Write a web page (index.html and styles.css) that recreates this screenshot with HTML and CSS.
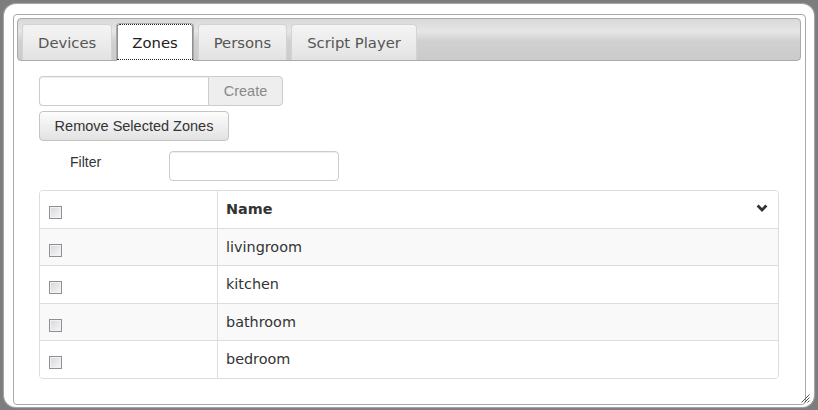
FILE: index.html
```html
<!DOCTYPE html>
<html>
<head>
<meta charset="utf-8">
<title>Zones</title>
<link rel="stylesheet" href="styles.css">
</head>
<body>
<div class="window">
  <div class="widget">
    <div class="tabbar">
      <div class="tab">Devices</div>
      <div class="tab active">Zones</div>
      <div class="tab">Persons</div>
      <div class="tab">Script Player</div>
    </div>
    <div class="panel">
      <div class="create-group">
        <input class="name-input" type="text">
        <button class="create-btn">Create</button>
      </div>
      <button class="remove-btn">Remove Selected Zones</button>
      <div class="filter-row">
        <label class="filter-label">Filter</label>
        <input class="filter-input" type="text">
      </div>
      <div class="table">
        <div class="row head">
          <div class="cell check"><input class="cb" type="checkbox"></div>
          <div class="cell name head-name"><span>Name</span>
            <svg class="chev" width="12" height="9" viewBox="0 0 12 9"><polyline points="1.6,1.6 6,6 10.4,1.6" fill="none" stroke="#333" stroke-width="2.8"/></svg>
          </div>
        </div>
        <div class="row odd">
          <div class="cell check"><input class="cb" type="checkbox"></div>
          <div class="cell name">livingroom</div>
        </div>
        <div class="row">
          <div class="cell check"><input class="cb" type="checkbox"></div>
          <div class="cell name">kitchen</div>
        </div>
        <div class="row odd">
          <div class="cell check"><input class="cb" type="checkbox"></div>
          <div class="cell name">bathroom</div>
        </div>
        <div class="row">
          <div class="cell check"><input class="cb" type="checkbox"></div>
          <div class="cell name">bedroom</div>
        </div>
      </div>
    </div>
  </div>
  <svg class="grip" width="9" height="9" viewBox="0 0 9 9">
    <line x1="8.5" y1="0.5" x2="0.5" y2="8.5" stroke="#555" stroke-width="1"/>
    <line x1="8.5" y1="3.5" x2="3.5" y2="8.5" stroke="#555" stroke-width="1"/>
    <line x1="8.5" y1="6.5" x2="6.5" y2="8.5" stroke="#555" stroke-width="1"/>
  </svg>
</div>
</body>
</html>
```
FILE: styles.css
```css
html, body {
  margin: 0;
  padding: 0;
  height: 100%;
}
body {
  background: #7d7d7d;
  overflow: hidden;
  font-family: "Liberation Sans", Arial, sans-serif;
}
.window {
  position: relative;
  box-sizing: border-box;
  margin: 4px 0 0 4px;
  width: 810px;
  height: 403px;
  padding: 10px 0 0 9px;
  background: #fff;
  border-radius: 12px;
  box-shadow: 0 0 1px 1px #a9a9a9;
}
.widget {
  box-sizing: border-box;
  width: 793px;
  height: 391px;
  border: 1px solid #aaa;
  border-radius: 4px;
  padding: 3px 4px 3px 3px;
}
.tabbar {
  box-sizing: border-box;
  height: 43px;
  border: 1px solid #aaa;
  border-radius: 4px;
  background: linear-gradient(#d9d9d9, #e6e6e6 30%, #d0d0d0 55%, #cbcbcb);
  display: flex;
  align-items: flex-end;
  gap: 4px;
  padding: 0 0 0 4px;
}
.tab {
  box-sizing: border-box;
  height: 36px;
  padding: 0 15px;
  border: 1px solid #d3d3d3;
  border-bottom: 0;
  border-radius: 4px 4px 0 0;
  background: linear-gradient(#f4f4f4, #ececec 50%, #e2e2e2);
  color: #555;
  font-family: "DejaVu Sans", Verdana, sans-serif;
  font-size: 14.8px;
  display: flex;
  align-items: center;
}
.tab.active {
  height: 38px;
  margin-bottom: -1px;
  background: #fff;
  border-color: #aaa;
  color: #212121;
  outline: 1px dotted #222;
  outline-offset: -2px;
}
.panel {
  padding: 15px 22px 0 22px;
}
.create-group {
  display: flex;
  height: 30px;
}
.name-input {
  box-sizing: border-box;
  width: 169px;
  height: 30px;
  margin: 0;
  border: 1px solid #ccc;
  border-right: 0;
  border-radius: 4px 0 0 4px;
  box-shadow: inset 0 1px 1px rgba(0,0,0,0.075);
  background: #fff;
}
.create-btn {
  box-sizing: border-box;
  width: 75px;
  height: 30px;
  margin: 0;
  padding: 0;
  border: 1px solid #ccc;
  border-radius: 0 4px 4px 0;
  background: #eee;
  color: #888;
  font-family: "Liberation Sans", Arial, sans-serif;
  font-size: 14.5px;
}
.remove-btn {
  display: block;
  box-sizing: border-box;
  margin: 5px 0 0 0;
  width: 190px;
  height: 30px;
  padding: 0;
  border: 1px solid #c4c4c4;
  border-radius: 4px;
  background: linear-gradient(#fdfdfd, #e2e2e2);
  color: #333;
  font-family: "Liberation Sans", Arial, sans-serif;
  font-size: 14.5px;
}
.filter-row {
  display: flex;
  align-items: flex-start;
  margin-top: 10px;
}
.filter-label {
  box-sizing: border-box;
  width: 130px;
  padding: 1px 0 0 31px;
  line-height: 20px;
  font-size: 14px;
  color: #333;
}
.filter-input {
  box-sizing: border-box;
  width: 170px;
  height: 30px;
  margin: 0;
  border: 1px solid #ccc;
  border-radius: 4px;
  box-shadow: inset 0 1px 1px rgba(0,0,0,0.075);
}
.table {
  margin-top: 9px;
  width: 740px;
  box-sizing: border-box;
  border: 1px solid #ddd;
  border-radius: 4px;
  overflow: hidden;
}
.row {
  display: grid;
  grid-template-columns: 178px 1fr;
  height: 37px;
  border-top: 1px solid #ddd;
  background: #fff;
}
.row.head {
  border-top: 0;
}
.row:nth-child(even) {
  height: 36px;
}
.row.odd {
  background: #f9f9f9;
}
.cell {
  box-sizing: border-box;
}
.check {
  border-right: 1px solid #ddd;
  padding: 15px 0 0 9px;
}
.name {
  padding: 8px 10px 0 8px;
  line-height: 21px;
  font-family: "DejaVu Sans", Verdana, sans-serif;
  font-size: 14.4px;
  color: #333;
}
.head-name {
  font-weight: bold;
  display: flex;
  justify-content: space-between;
  align-items: flex-start;
}
.chev {
  margin-top: 5px;
}
.cb {
  -webkit-appearance: none;
  appearance: none;
  display: block;
  box-sizing: border-box;
  width: 13px;
  height: 13px;
  margin: 0;
  border: 1px solid #8f8f8f;
  border-radius: 0;
  background: linear-gradient(135deg, #d6d6dc, #f7f7f9);
  box-shadow: inset 0 0 0 1px #f2f2f2;
}
.grip {
  position: absolute;
  right: 4px;
  bottom: 4px;
}
```
